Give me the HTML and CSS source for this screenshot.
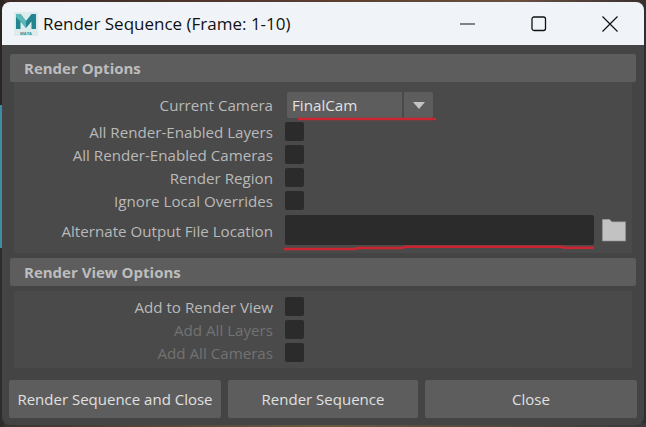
FILE: index.html
```html
<!DOCTYPE html>
<html lang="en">
<head>
  <meta charset="UTF-8">
  <title>Render Sequence</title>
  <link rel="stylesheet" href="styles.css">
</head>
<body>
  <div class="window">
    <div class="titlebar">
      <svg class="app-icon" width="24" height="24" viewBox="0 0 24 24">
        <rect width="24" height="24" fill="#dcecec"/>
        <path d="M2 17V2H6.5L12 9L17.5 2H22V17H17.5V9.5L12 16L6.5 9.5V17Z" fill="#23858f"/>
        <path d="M2 2H6.5L12 9V16L6.5 9.5L2 5Z" fill="#5cb8b8"/>
        <text x="12" y="22.5" text-anchor="middle" class="app-icon-text">MAYA</text>
      </svg>
      <span class="title">Render Sequence (Frame: 1-10)</span>
      <div class="win-buttons">
        <svg width="16" height="16" viewBox="0 0 16 16"><path d="M0 8H15" stroke="#111" stroke-width="1.2"/></svg>
        <svg width="16" height="16" viewBox="0 0 16 16"><rect x="1" y="1" width="13.5" height="13.5" rx="2" fill="none" stroke="#111" stroke-width="1.3"/></svg>
        <svg width="16" height="16" viewBox="0 0 16 16"><path d="M0.5 0.5L15.5 15.5M15.5 0.5L0.5 15.5" stroke="#111" stroke-width="1.2"/></svg>
      </div>
    </div>

    <div class="content">
      <div class="section-header">Render Options</div>
      <div class="section-body first">
        <div class="row combo-row">
          <label>Current Camera</label>
          <div class="combo">
            <span class="combo-value">FinalCam</span>
            <span class="combo-arrow"></span>
          </div>
        </div>
        <div class="row"><label>All Render-Enabled Layers</label><span class="check"></span></div>
        <div class="row"><label>All Render-Enabled Cameras</label><span class="check"></span></div>
        <div class="row"><label>Render Region</label><span class="check"></span></div>
        <div class="row"><label>Ignore Local Overrides</label><span class="check"></span></div>
        <div class="row field-row">
          <label>Alternate Output File Location</label>
          <span class="field"></span>
          <svg class="folder" width="24" height="23" viewBox="0 0 24 23">
            <path d="M0.3 0.3H7.5L10 2.8H23.7V22H0.3Z" fill="#c2c2c2" stroke="#8a8a8a" stroke-width="0.6"/>
          </svg>
        </div>
      </div>

      <div class="section-header second">Render View Options</div>
      <div class="section-body">
        <div class="row"><label>Add to Render View</label><span class="check"></span></div>
        <div class="row"><label class="disabled">Add All Layers</label><span class="check"></span></div>
        <div class="row"><label class="disabled">Add All Cameras</label><span class="check"></span></div>
      </div>

      <div class="buttons">
        <button>Render Sequence and Close</button>
        <button>Render Sequence</button>
        <button>Close</button>
      </div>
    </div>
  </div>

  <!-- red marker lines drawn over the dialog -->
  <svg class="markup" width="646" height="427" viewBox="0 0 646 427">
    <path d="M298 119H436" stroke="#cc2430" stroke-width="2.6" fill="none"/>
    <path d="M284 249H355L358 248H402L405 246.8H561L564 247.8H594" stroke="#cc2430" stroke-width="2.6" fill="none"/>
  </svg>
</body>
</html>
```

FILE: styles.css
```css
html, body {
  margin: 0;
  height: 100%;
  overflow: hidden;
}

body {
  font-family: "Open Sans", Arial, sans-serif;
  background:
    linear-gradient(to bottom, #2a2422 0, #2a2422 105px, #3b8ea3 105px, #3b8ea3 248px, #2d2d2d 248px) left / 4px 100% no-repeat,
    linear-gradient(to right, #3a2a26, #5a3d30 50%, #6a5040 80%, #3a3030) top / 100% 4px no-repeat,
    linear-gradient(to right, #3a3430, #6a5a40 50%, #3a3a3a) bottom / 100% 4px no-repeat,
    #2f2f33;
  padding: 2px;
  box-sizing: border-box;
}

.window {
  width: 642px;
  height: 423px;
  background-color: #444;
  border-radius: 8px;
  overflow: hidden;
  display: flex;
  flex-direction: column;
}

.titlebar {
  height: 43px;
  flex-shrink: 0;
  background-color: #f0f4f9;
  display: flex;
  align-items: center;
  padding-left: 12px;
}

.app-icon {
  margin-right: 5px;
}

.app-icon-text {
  font-family: "Open Sans", sans-serif;
  font-size: 4px;
  font-weight: 700;
  fill: #2a8f98;
}

.title {
  font-size: 17px;
  color: #111;
}

.win-buttons {
  margin-left: auto;
  display: flex;
  gap: 55px;
  padding-right: 26px;
}

.content {
  padding: 9px 7px 0;
  display: flex;
  flex-direction: column;
}

.section-header {
  height: 28px;
  margin: 0 1px;
  padding-left: 14px;
  display: flex;
  align-items: center;
  background-color: #5d5d5d;
  border-radius: 2px;
  color: #bdbdbd;
  font-size: 15px;
  font-weight: 700;
}

.section-header.second {
  margin-top: 5px;
}

.section-body {
  margin: 5px 5px 0;
  padding: 4px 0 0;
  background-color: #4a4a4a;
  height: 77px;
  box-sizing: border-box;
}

.section-body.first {
  height: 171px;
  margin-top: 0;
  padding-top: 10px;
}

.row {
  display: flex;
  align-items: center;
  height: 23px;
}

.row label {
  width: 259px;
  margin-right: 12px;
  text-align: right;
  color: #b9b9b9;
  font-size: 15.15px;
}

.row label.disabled {
  color: #727272;
}

.check {
  width: 19px;
  height: 19px;
  background-color: #2b2b2b;
  border-radius: 2px;
}

.combo-row {
  height: 26px;
  margin-bottom: 2px;
}

.combo {
  margin-left: 2px;
  width: 146px;
  height: 26px;
  background-color: #5d5d5d;
  border-radius: 2px;
  display: flex;
  align-items: center;
  color: #e2e2e2;
  font-size: 15.2px;
}

.combo-value {
  flex: 1;
  padding-left: 5px;
  height: 26px;
  line-height: 27px;
  border-right: 2px solid #4a4a4a;
}

.combo-arrow {
  width: 29px;
  display: flex;
  justify-content: center;
}

.combo-arrow::after {
  content: "";
  border-left: 6px solid transparent;
  border-right: 6px solid transparent;
  border-top: 7px solid #c4c4c4;
}

.field-row {
  height: 30px;
  margin-top: 3px;
}

.field-row label {
  padding-top: 2px;
}

.field {
  width: 309px;
  height: 30px;
  background-color: #2b2b2b;
  border-radius: 2px;
}

.folder {
  margin-left: 8px;
}

.buttons {
  margin-top: 12px;
  display: grid;
  grid-template-columns: 212px 190px 212px;
  gap: 7px;
}

.buttons button {
  height: 38px;
  padding: 0;
  border: none;
  border-radius: 2px;
  background-color: #5d5d5d;
  color: #e0e0e0;
  font-family: inherit;
  font-size: 15px;
}

.markup {
  position: absolute;
  top: 0;
  left: 0;
  pointer-events: none;
}
```
